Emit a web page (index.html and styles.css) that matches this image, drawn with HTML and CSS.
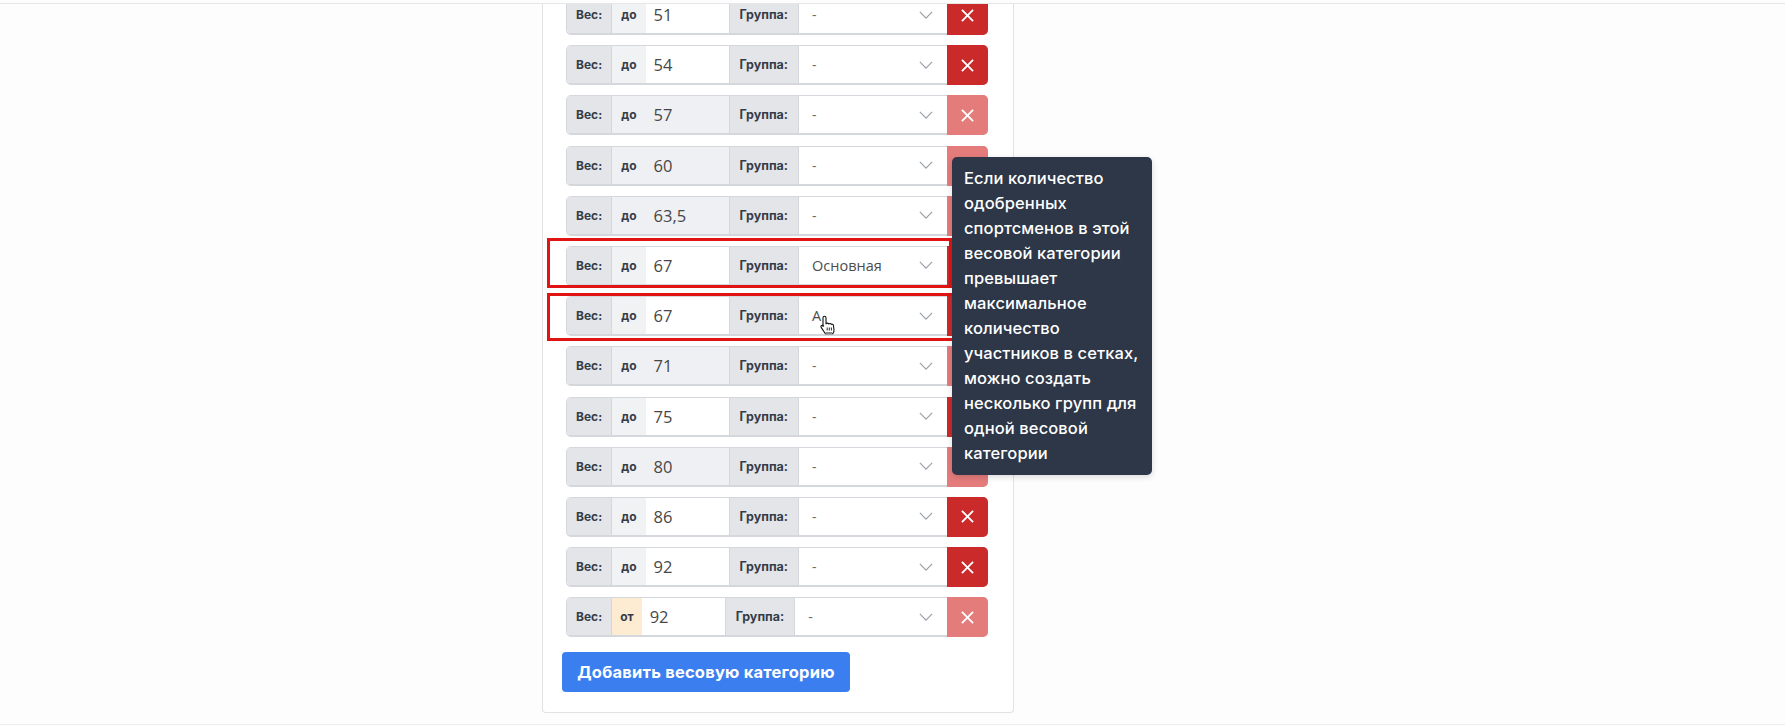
FILE: index.html
```html
<!DOCTYPE html>
<html lang="ru">
<head>
<meta charset="utf-8">
<title>Весовые категории</title>
<link rel="stylesheet" href="styles.css">
</head>
<body>
<div class="topbar"></div>
<main class="main">
  <section class="card">
    <div class="rows">
      <div class="row"><span class="lbl">Вес:</span><span class="pre">до</span><span class="val">51</span><span class="lbl grp">Группа:</span><span class="sel">-<svg class="chev" viewBox="0 0 16 9"><path d="M1 1l7 7 7-7"/></svg></span><span class="del"><svg viewBox="0 0 14 14"><path d="M1 1l12 12M13 1L1 13"/></svg></span></div>
      <div class="row"><span class="lbl">Вес:</span><span class="pre">до</span><span class="val">54</span><span class="lbl grp">Группа:</span><span class="sel">-<svg class="chev" viewBox="0 0 16 9"><path d="M1 1l7 7 7-7"/></svg></span><span class="del"><svg viewBox="0 0 14 14"><path d="M1 1l12 12M13 1L1 13"/></svg></span></div>
      <div class="row off"><span class="lbl">Вес:</span><span class="pre">до</span><span class="val">57</span><span class="lbl grp">Группа:</span><span class="sel">-<svg class="chev" viewBox="0 0 16 9"><path d="M1 1l7 7 7-7"/></svg></span><span class="del"><svg viewBox="0 0 14 14"><path d="M1 1l12 12M13 1L1 13"/></svg></span></div>
      <div class="row off"><span class="lbl">Вес:</span><span class="pre">до</span><span class="val">60</span><span class="lbl grp">Группа:</span><span class="sel">-<svg class="chev" viewBox="0 0 16 9"><path d="M1 1l7 7 7-7"/></svg></span><span class="del"><svg viewBox="0 0 14 14"><path d="M1 1l12 12M13 1L1 13"/></svg></span></div>
      <div class="row off"><span class="lbl">Вес:</span><span class="pre">до</span><span class="val">63,5</span><span class="lbl grp">Группа:</span><span class="sel">-<svg class="chev" viewBox="0 0 16 9"><path d="M1 1l7 7 7-7"/></svg></span><span class="del"><svg viewBox="0 0 14 14"><path d="M1 1l12 12M13 1L1 13"/></svg></span></div>
      <div class="row marked"><span class="lbl">Вес:</span><span class="pre">до</span><span class="val">67</span><span class="lbl grp">Группа:</span><span class="sel filled">Основная<svg class="chev" viewBox="0 0 16 9"><path d="M1 1l7 7 7-7"/></svg></span><span class="del"><svg viewBox="0 0 14 14"><path d="M1 1l12 12M13 1L1 13"/></svg></span><span class="mark mark-a"></span></div>
      <div class="row marked"><span class="lbl">Вес:</span><span class="pre">до</span><span class="val">67</span><span class="lbl grp">Группа:</span><span class="sel filled">А<svg class="chev" viewBox="0 0 16 9"><path d="M1 1l7 7 7-7"/></svg></span><span class="del"><svg viewBox="0 0 14 14"><path d="M1 1l12 12M13 1L1 13"/></svg></span><span class="mark mark-b"></span>
        <svg class="cursor" viewBox="0 0 18 20"><path d="M5.5 1.2c.9 0 1.5.6 1.5 1.5v6.1l.3-.1c.6-.9 2.1-.8 2.5.3.6-.7 2-.6 2.4.4.6-.5 1.9-.3 2.2.8l.6 4.6c.2 1.6-.3 2.9-1.3 4H6.4L2.3 12.6c-.6-.8-.4-1.8.4-2.2.7-.3 1.4-.1 1.9.5L4 11.4V2.7c0-.9.6-1.5 1.5-1.5z" fill="#fff" stroke="#111" stroke-width="1.1" stroke-linejoin="round"/><path d="M8.2 12.5v3M10.3 12.5v3M12.4 12.5v3" stroke="#111" stroke-width=".9"/><rect x="6.6" y="17" width="6.5" height="2" fill="#888"/></svg>
      </div>
      <div class="row off"><span class="lbl">Вес:</span><span class="pre">до</span><span class="val">71</span><span class="lbl grp">Группа:</span><span class="sel">-<svg class="chev" viewBox="0 0 16 9"><path d="M1 1l7 7 7-7"/></svg></span><span class="del"><svg viewBox="0 0 14 14"><path d="M1 1l12 12M13 1L1 13"/></svg></span></div>
      <div class="row"><span class="lbl">Вес:</span><span class="pre">до</span><span class="val">75</span><span class="lbl grp">Группа:</span><span class="sel">-<svg class="chev" viewBox="0 0 16 9"><path d="M1 1l7 7 7-7"/></svg></span><span class="del"><svg viewBox="0 0 14 14"><path d="M1 1l12 12M13 1L1 13"/></svg></span></div>
      <div class="row off"><span class="lbl">Вес:</span><span class="pre">до</span><span class="val">80</span><span class="lbl grp">Группа:</span><span class="sel">-<svg class="chev" viewBox="0 0 16 9"><path d="M1 1l7 7 7-7"/></svg></span><span class="del"><svg viewBox="0 0 14 14"><path d="M1 1l12 12M13 1L1 13"/></svg></span></div>
      <div class="row"><span class="lbl">Вес:</span><span class="pre">до</span><span class="val">86</span><span class="lbl grp">Группа:</span><span class="sel">-<svg class="chev" viewBox="0 0 16 9"><path d="M1 1l7 7 7-7"/></svg></span><span class="del"><svg viewBox="0 0 14 14"><path d="M1 1l12 12M13 1L1 13"/></svg></span></div>
      <div class="row"><span class="lbl">Вес:</span><span class="pre">до</span><span class="val">92</span><span class="lbl grp">Группа:</span><span class="sel">-<svg class="chev" viewBox="0 0 16 9"><path d="M1 1l7 7 7-7"/></svg></span><span class="del"><svg viewBox="0 0 14 14"><path d="M1 1l12 12M13 1L1 13"/></svg></span></div>
      <div class="row last"><span class="lbl">Вес:</span><span class="pre from">от</span><span class="val">92</span><span class="lbl grp">Группа:</span><span class="sel">-<svg class="chev" viewBox="0 0 16 9"><path d="M1 1l7 7 7-7"/></svg></span><span class="del"><svg viewBox="0 0 14 14"><path d="M1 1l12 12M13 1L1 13"/></svg></span></div>
    </div>
    <button class="add">Добавить весовую категорию</button>
  </section>
</main>
<footer class="footer"></footer>
<div class="tooltip">Если количество<br>одобренных<br>спортсменов в этой<br>весовой категории<br>превышает<br>максимальное<br>количество<br>участников в сетках,<br>можно создать<br>несколько групп для<br>одной весовой<br>категории</div>
</body>
</html>
```

FILE: styles.css
```css
* { box-sizing: border-box; }
html, body { margin: 0; padding: 0; }
body {
  position: relative;
  width: 1785px;
  height: 726px;
  overflow: hidden;
  background: #fdfdfd;
  font-family: Inter, "Noto Sans", sans-serif;
  color: #333;
}
.topbar {
  height: 4px;
  border-bottom: 1px solid #e6e6e6;
}
.main {
  height: 720px;
  overflow: hidden;
}
.footer {
  height: 2px;
  border-top: 1px solid #ececec;
}
.card {
  margin-left: 542px;
  width: 472px;
  border: 1px solid #e2e2e2;
  border-top: none;
  border-radius: 0 0 4px 4px;
  padding: 0 19px 20px 19px;
  background: #fff;
}
.rows {
  margin-top: -9px;
  display: flex;
  flex-direction: column;
  gap: 10.2px;
  padding-left: 4px;
}
.row {
  position: relative;
  display: flex;
  width: 422px;
  height: 40px;
  border: 1px solid #d4d7dc;
  border-bottom-width: 2px;
  border-radius: 5px;
  background: #fff;
}
.row > span:first-child { border-radius: 4px 0 0 4px; }
.lbl {
  display: flex;
  align-items: center;
  padding: 0 9px;
  background: #e3e5e9;
  font-weight: 700;
  font-size: 12px;
  color: #363c47;
  border-right: 1px solid #d4d7dc;
}
.lbl.grp {
  padding: 0 10px;
  font-size: 12.5px;
}
.pre {
  display: flex;
  align-items: center;
  padding: 0 9px;
  background: #f1f2f4;
  font-weight: 700;
  font-size: 12px;
  color: #363c47;
}
.pre.from { background: #fdebd2; padding: 0 8px; }
.val {
  display: flex;
  align-items: center;
  width: 84px;
  padding-left: 8px;
  font-family: "Open Sans", sans-serif;
  font-size: 16.5px;
  color: #474747;
  background: #fff;
  border-right: 1px solid #d4d7dc;
}
.row.off .val { background: #eff0f3; }
.row.off .pre { background: #eff0f3; }
.sel {
  flex: 1;
  display: flex;
  align-items: center;
  justify-content: space-between;
  padding: 0 14px 0 13px;
  font-family: "Open Sans", sans-serif;
  font-size: 14px;
  color: #6b6b6b;
  background: #fff;
}
.sel.filled { color: #4d4d4d; font-size: 14.5px; }
.chev {
  width: 14px;
  height: 8px;
  fill: none;
  stroke: #9aa0a8;
  stroke-width: 1.4;
}
.del {
  width: 41px;
  margin: -1px -1px -2px 0;
  display: flex;
  align-items: center;
  justify-content: center;
  background: #cb2a2a;
  border-radius: 0 5px 5px 0;
}
.row.off .del, .row.last .del { background: #e57c7c; }
.del svg {
  width: 13px;
  height: 13px;
  fill: none;
  stroke: #fff;
  stroke-width: 2;
}
.mark {
  position: absolute;
  border: 3px solid #e11414;
  pointer-events: none;
}
.mark-a { left: -20px; top: -9px; width: 405px; height: 50px; }
.mark-b { left: -20px; top: -4px; width: 408px; height: 48px; }
.cursor {
  position: absolute;
  left: 252px;
  top: 18px;
  width: 18px;
  height: 20px;
}
.add {
  display: block;
  margin-top: 15px;
  width: 288px;
  height: 40px;
  border: none;
  border-radius: 4px;
  background: #3a7ef0;
  color: #fff;
  font-family: Inter, "Noto Sans", sans-serif;
  font-weight: 700;
  font-size: 16.5px;
  letter-spacing: 0.2px;
  padding: 0;
}
.tooltip {
  position: absolute;
  left: 952px;
  top: 157px;
  width: 200px;
  padding: 9px 12px;
  background: #2d3748;
  border-radius: 5px;
  color: #fff;
  font-family: Inter, "Noto Sans", sans-serif;
  font-weight: 500;
  font-size: 16.5px;
  letter-spacing: 0.1px;
  line-height: 25px;
  white-space: nowrap;
  box-shadow: 0 2px 6px rgba(0,0,0,0.15);
}
```
